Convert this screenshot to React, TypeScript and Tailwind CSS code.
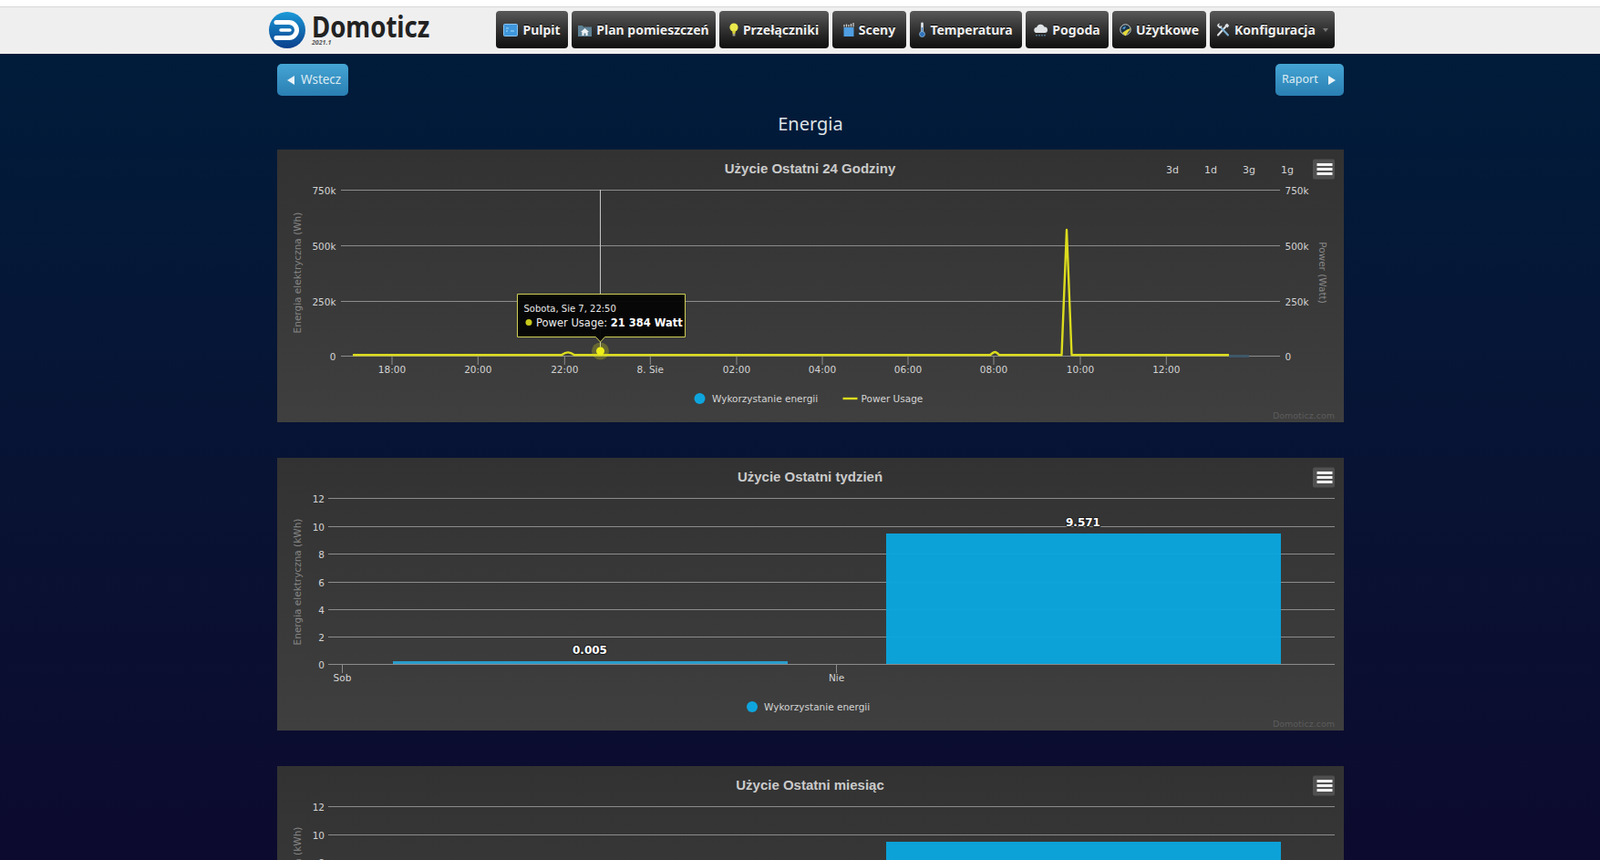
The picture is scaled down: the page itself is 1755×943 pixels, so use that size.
const font = '"DejaVu Sans", sans-serif';
const grid = '#8c8c8c';

const Logo = () => (
  <svg width="40" height="40" viewBox="0 0 40 40" className="shrink-0">
    <defs>
      <linearGradient id="logoFill" x1="0" y1="0" x2="0" y2="1">
        <stop offset="0" stopColor="#1b9ad8" />
        <stop offset="1" stopColor="#0a3f8c" />
      </linearGradient>
    </defs>
    <circle cx="20" cy="20" r="20" fill="url(#logoFill)" />
    <path d="M8 11.5H22a8.5 8.5 0 0 1 0 17H8" fill="none" stroke="#fff" strokeWidth="5" strokeLinecap="round" />
    <path d="M13 20H23" stroke="#fff" strokeWidth="3.5" strokeLinecap="round" />
  </svg>
);

const PulpitIcon = () => (
  <svg width="16" height="14" viewBox="0 0 16 14">
    <rect x="0.5" y="0.5" width="15" height="13" rx="1" fill="#3f97dc" stroke="#8cc4ee" />
    <path d="M3 5h3M3 8h2M8 8h4" stroke="#a9dcf8" />
  </svg>
);

const PlanIcon = () => (
  <svg width="15" height="14" viewBox="0 0 15 14">
    <path d="M0 2h5l1 1.5h9V14H0z" fill="#5f8296" />
    <path d="M7.5 5L3 9h1.4v4h6.2V9H12z" fill="#eef2f4" />
    <path d="M6.5 13v-2.5h2V13" fill="#5f8296" />
  </svg>
);

const BulbIcon = () => (
  <svg width="10" height="15" viewBox="0 0 10 15">
    <circle cx="5" cy="5" r="4.6" fill="#eaea4c" />
    <path d="M3 8.5L3.6 12h2.8L7 8.5z" fill="#d6cf3a" />
    <rect x="3.6" y="12" width="2.8" height="2.5" fill="#9a9a8c" />
  </svg>
);

const ScenesIcon = () => (
  <svg width="12" height="15" viewBox="0 0 12 15">
    <rect x="0.5" y="5" width="11" height="10" fill="#4f9fe2" />
    <path d="M1 4.5L1 2M3.5 4.5L3.5 1.5M6 4.5L6 2M8.5 4.5L8.5 1M11 4.5L11 0" stroke="#d9d9d9" strokeWidth="1.2" />
  </svg>
);

const ThermoIcon = () => (
  <svg width="7" height="17" viewBox="0 0 7 17">
    <rect x="2.2" y="0.5" width="2.6" height="11" rx="1.3" fill="#e6edf2" />
    <rect x="2.8" y="6" width="1.4" height="7" fill="#3c7fc4" />
    <circle cx="3.5" cy="13.5" r="3" fill="#2f73bb" stroke="#9cc2e0" strokeWidth="0.7" />
  </svg>
);

const WeatherIcon = () => (
  <svg width="15" height="14" viewBox="0 0 15 14">
    <path d="M3.5 10a3 3 0 0 1-.4-6A4.4 4.4 0 0 1 11.5 3.6 3.2 3.2 0 0 1 12 10z" fill="#dfe3e6" />
    <path d="M3 12v1.5M6 12v1.5M9 12v1.5M12 12v1.5" stroke="#6fa6c8" strokeWidth="1.2" />
  </svg>
);

const UtilityIcon = () => (
  <svg width="13" height="14" viewBox="0 0 13 14">
    <circle cx="6.5" cy="6.5" r="5.7" fill="#1d3345" stroke="#cfd4d6" strokeWidth="1" />
    <path d="M6.5 13.5L12.5 5 8 6.5 3 10z" fill="#e6d93a" />
    <path d="M3 5.5a3.5 3.5 0 0 1 4-2.5L5.5 6z" fill="#4c9ad6" />
  </svg>
);

const ToolsIcon = () => (
  <svg width="15" height="15" viewBox="0 0 15 15">
    <path d="M2 13.5L11 3.5" stroke="#dfe3e6" strokeWidth="2" strokeLinecap="round" />
    <path d="M9.5 2.5L12 0.8 14.2 3 12.5 5.5z" fill="#dfe3e6" />
    <path d="M13 13.5L4.5 4.5" stroke="#7fb4d6" strokeWidth="2" strokeLinecap="round" />
    <path d="M1 3.2A3 3 0 0 1 4 0.6L3 2.8l1.4 1.2L6.4 3A3 3 0 0 1 3.4 6z" fill="#dfe3e6" />
  </svg>
);

const navItems = [
  { label: 'Pulpit', icon: <PulpitIcon />, width: 'w-[79px]' },
  { label: 'Plan pomieszczeń', icon: <PlanIcon />, width: 'w-[158px]' },
  { label: 'Przełączniki', icon: <BulbIcon />, width: 'w-[120px]' },
  { label: 'Sceny', icon: <ScenesIcon />, width: 'w-[81px]' },
  { label: 'Temperatura', icon: <ThermoIcon />, width: 'w-[123px]' },
  { label: 'Pogoda', icon: <WeatherIcon />, width: 'w-[91px]' },
  { label: 'Użytkowe', icon: <UtilityIcon />, width: 'w-[103px]' },
];

const Header = () => (
  <header className="h-[59px] shrink-0 bg-white">
    <div className="h-[7px] border-b border-[#d8d8d8] box-content" />
    <div className="h-[51px] bg-[#efefef] flex items-center pl-[295px]">
      <div className="w-[249px] shrink-0 flex items-center gap-[7px] -mt-[1px]">
        <Logo />
        <div className="flex flex-col">
          <span className="font-['Liberation_Sans_Narrow','Liberation_Sans',sans-serif] font-bold text-[32px] leading-[26px] text-[#222] origin-left scale-x-[0.86]">
            Domoticz
          </span>
          <span className="font-['DejaVu_Serif',serif] italic font-bold text-[7px] leading-[9px] text-[#555]">2021.1</span>
        </div>
      </div>
      <nav className="flex gap-1 -mt-[2px]">
        {navItems.map((item) => (
          <a
            key={item.label}
            href="#"
            className={`${item.width} h-[41px] flex items-center justify-center gap-[5px] rounded-[4px] bg-linear-to-b from-[#595959] to-[#0f0f0f] font-['Liberation_Sans',sans-serif] font-bold text-[14px] text-[#f0f0f0] [text-shadow:0_-1px_0_#000]`}
          >
            {item.icon}
            {item.label}
          </a>
        ))}
        <a
          href="#"
          className="w-[137px] h-[41px] flex items-center justify-center gap-[5px] rounded-[4px] bg-linear-to-b from-[#595959] to-[#0f0f0f] font-['Liberation_Sans',sans-serif] font-bold text-[14px] text-[#f0f0f0] [text-shadow:0_-1px_0_#000]"
        >
          <ToolsIcon />
          Konfiguracja
          <span className="ml-[3px] border-x-[3.5px] border-x-transparent border-t-[4px] border-t-[#777]" />
        </a>
      </nav>
    </div>
  </header>
);

const MenuButton = () => (
  <g>
    <rect x="1136" y="10.5" width="24" height="22" rx="2" fill="#505050" />
    <path d="M1140.5 16.5H1157.5M1140.5 21.5H1157.5M1140.5 26.5H1157.5" stroke="#f0f0f0" strokeWidth="3" />
  </g>
);

const Credit = () => (
  <text x="1160" y="295" textAnchor="end" fontSize="9.5" fill="#5c5c5c" fontFamily={font}>
    Domoticz.com
  </text>
);

const Card = ({ children }: { children: React.ReactNode }) => (
  <section className="h-[299px] mb-[39px] shrink-0 bg-linear-to-b from-[#323232] to-[#3f3f3f]">
    <svg width="1170" height="299" viewBox="0 0 1170 299" className="block">
      {children}
    </svg>
  </section>
);

const Title = ({ text }: { text: string }) => (
  <text x="584.5" y="26" textAnchor="middle" fontSize="15" fontWeight="700" fill="#cbcbcb" fontFamily='"Liberation Sans", sans-serif'>
    {text}
  </text>
);

const dayTicks = [
  { x: 126, label: '18:00' },
  { x: 220.3, label: '20:00' },
  { x: 315.3, label: '22:00' },
  { x: 409.3, label: '8. Sie' },
  { x: 504, label: '02:00' },
  { x: 598, label: '04:00' },
  { x: 692, label: '06:00' },
  { x: 786, label: '08:00' },
  { x: 881, label: '10:00' },
  { x: 975.3, label: '12:00' },
];

const dayGrid = [
  { y: 44.5, label: '750k' },
  { y: 105.5, label: '500k' },
  { y: 166.5, label: '250k' },
  { y: 226.5, label: '0' },
];

const rangeButtons = [
  { x: 982, label: '3d' },
  { x: 1024, label: '1d' },
  { x: 1066, label: '3g' },
  { x: 1108, label: '1g' },
];

const DayChart = () => (
  <Card>
    <Title text="Użycie Ostatni 24 Godziny" />
    <g fontFamily={font} fontSize="10.5" fill="#d4d4d4">
      {rangeButtons.map((b) => (
        <text key={b.label} x={b.x} y="26" textAnchor="middle" fontSize="11">
          {b.label}
        </text>
      ))}
      {dayGrid.map((g) => (
        <g key={g.label}>
          <path d={`M70 ${g.y}H1100`} stroke={grid} />
          <text x="64.5" y={g.y + 4} textAnchor="end">
            {g.label}
          </text>
          <text x="1105.5" y={g.y + 4}>
            {g.label}
          </text>
        </g>
      ))}
      {dayTicks.map((t) => (
        <g key={t.label}>
          <path d={`M${t.x} 227V236`} stroke={grid} />
          <text x={t.x} y="245" textAnchor="middle">
            {t.label}
          </text>
        </g>
      ))}
    </g>
    <MenuButton />
    <text transform="translate(26 135) rotate(-90)" textAnchor="middle" fontSize="10.5" fill="#868686" fontFamily={font}>
      Energia elektryczna (Wh)
    </text>
    <text transform="translate(1143 135) rotate(90)" textAnchor="middle" fontSize="10.5" fill="#868686" fontFamily={font}>
      Power (Watt)
    </text>
    <path d="M354.5 44V226" stroke="#c4c4c4" />
    <rect x="1044" y="225" width="22" height="3" fill="#3d5768" />
    <path
      d="M83 225.2H312Q316 222.4 319 222.4T326 225.2H782Q786 222 787.5 222T792 225.2H860.5L866 88 871.5 225.2H1044"
      fill="none"
      stroke="#dcdc1e"
      strokeWidth="2.4"
      strokeLinejoin="round"
    />
    <circle cx="354.5" cy="221" r="9.5" fill="#dcdc1e" fillOpacity="0.28" />
    <circle cx="354.5" cy="221" r="4.5" fill="#eeee1a" />
    <path
      d="M263.5 158.5H447.5V205.5H359.5L354.5 211 349.5 205.5H263.5Z"
      fill="#050505"
      fillOpacity="0.96"
      stroke="#cfcf55"
    />
    <text x="270.5" y="177.5" fontSize="10" fill="#e8e8e8" fontFamily={font}>
      Sobota, Sie 7, 22:50
    </text>
    <circle cx="276" cy="189.5" r="3.5" fill="#c9c91c" />
    <text x="284" y="193.5" fontSize="11.5" fill="#ececec" fontFamily={font}>
      Power Usage:{' '}
      <tspan fontWeight="700" fill="#fff">
        21 384 Watt
      </tspan>
    </text>
    <circle cx="463.5" cy="273" r="6" fill="#0ea5de" />
    <text x="477" y="277" fontSize="10.5" fill="#d4d4d4" fontFamily={font}>
      Wykorzystanie energii
    </text>
    <path d="M620.5 273H636.5" stroke="#dcdc1e" strokeWidth="2.4" />
    <text x="640.5" y="277" fontSize="10.5" fill="#d4d4d4" fontFamily={font}>
      Power Usage
    </text>
    <Credit />
  </Card>
);

const barGrid = [
  { y: 44.5, label: '12' },
  { y: 75.5, label: '10' },
  { y: 105.5, label: '8' },
  { y: 136.5, label: '6' },
  { y: 166.5, label: '4' },
  { y: 196.5, label: '2' },
  { y: 226.5, label: '0' },
];

const BarChart = ({ title, showLabels }: { title: string; showLabels?: boolean }) => (
  <Card>
    <Title text={title} />
    <g fontFamily={font} fontSize="10.5" fill="#d4d4d4">
      {barGrid.map((g) => (
        <g key={g.label}>
          <path d={`M56 ${g.y}H1160`} stroke={grid} />
          <text x="52" y={g.y + 4} textAnchor="end">
            {g.label}
          </text>
        </g>
      ))}
      <path d="M71.5 227V236M613.5 227V236" stroke={grid} />
      <text x="71.5" y="245" textAnchor="middle">
        Sob
      </text>
      <text x="613.5" y="245" textAnchor="middle">
        Nie
      </text>
    </g>
    <MenuButton />
    <text transform="translate(26 136) rotate(-90)" textAnchor="middle" fontSize="10.5" fill="#868686" fontFamily={font}>
      Energia elektryczna (kWh)
    </text>
    <rect x="127" y="223" width="433" height="3" fill="#2a9ccb" />
    <rect x="668" y="83" width="433" height="143" fill="#0aa5de" fillOpacity="0.96" />
    {showLabels && (
      <g fontFamily={font} fontSize="12" fontWeight="700" fill="#fff" stroke="#1c1c1c" strokeWidth="2" paintOrder="stroke" textAnchor="middle">
        <text x="343" y="214.5">
          0.005
        </text>
        <text x="884" y="74.5">
          9.571
        </text>
      </g>
    )}
    <circle cx="521" cy="273" r="6" fill="#0ea5de" />
    <text x="534" y="277" fontSize="10.5" fill="#d4d4d4" fontFamily={font}>
      Wykorzystanie energii
    </text>
    <Credit />
  </Card>
);

const SideButton = ({ children }: { children: React.ReactNode }) => (
  <a
    href="#"
    className="h-[35px] flex items-center rounded-[5px] bg-linear-to-b from-[#45a5d4] to-[#2a7fb2] font-['Liberation_Sans',sans-serif] text-[#dcebf3]"
  >
    {children}
  </a>
);

export default function App() {
  return (
    <div className="h-screen overflow-hidden flex flex-col">
      <Header />
      <main className="flex-1 overflow-hidden bg-linear-to-b from-[#001c3a] to-[#0c0a2e]">
        <div className="w-[1170px] ml-[304px]">
          <div className="flex justify-between pt-[11px]">
            <SideButton>
              <div className="w-[78px] flex items-center pl-[11px] gap-[7px] text-[13.5px]">
                <span className="border-y-[5px] border-y-transparent border-r-[8px] border-r-[#e8f2f8]" />
                Wstecz
              </div>
            </SideButton>
            <SideButton>
              <div className="w-[75px] flex items-center pl-[7px] gap-[11px] text-[12.5px]">
                Raport
                <span className="border-y-[5px] border-y-transparent border-l-[8px] border-l-[#e8f2f8]" />
              </div>
            </SideButton>
          </div>
          <h1 className="h-[59px] pt-[3px] flex items-center justify-center font-['Liberation_Sans',sans-serif] text-[20px] text-[#dfe3e6]">
            Energia
          </h1>
          <DayChart />
          <BarChart title="Użycie Ostatni tydzień" showLabels />
          <BarChart title="Użycie Ostatni miesiąc" />
        </div>
      </main>
    </div>
  );
}
